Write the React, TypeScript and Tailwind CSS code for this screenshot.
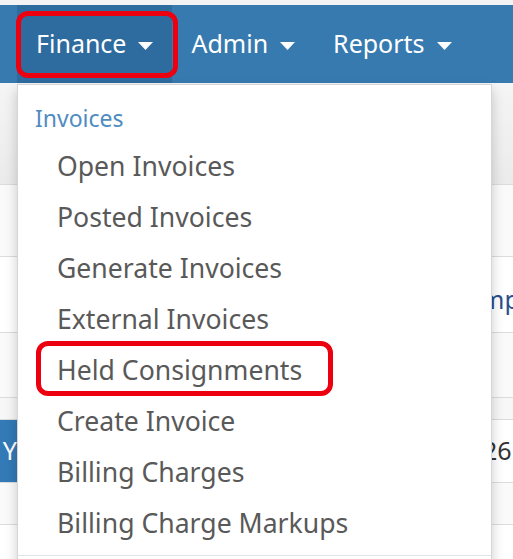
import React from "react";

const ITEMS = [
	"Open Invoices",
	"Posted Invoices",
	"Generate Invoices",
	"External Invoices",
	"Held Consignments",
	"Create Invoice",
	"Billing Charges",
	"Billing Charge Markups",
];

function Caret(): React.ReactElement {
	return (
		<svg width="15" height="8" viewBox="0 0 15 8" className="ml-3 mt-1">
			<path d="M0 0 L15 0 L7.5 8 Z" fill="white" />
		</svg>
	);
}

function NavItem({ label, active }: { label: string; active?: boolean }): React.ReactElement {
	return (
		<div className={`flex items-center h-full px-[19px] ${active ? "bg-[#2e6b9f]" : ""}`}>
			<span>{label}</span>
			<Caret />
		</div>
	);
}

// background table rows peeking out on both sides of the menu
const ROWS = [
	{ h: 102, cls: "bg-gradient-to-b from-[#f5f5f5] to-[#ebebeb]" },
	{ h: 72, cls: "bg-[#fafafa]" },
	{ h: 76, cls: "bg-white" },
	{ h: 65, cls: "bg-[#fafafa]" },
	{ h: 22, cls: "bg-[#f7f7f7]" },
	{ h: 63, cls: "bg-white", blue: true },
	{ h: 42, cls: "bg-[#fafafa]" },
	{ h: 40, cls: "bg-white" },
];

export default function App(): React.ReactElement {
	return (
		<div
			className="relative w-[513px] h-[559px] overflow-hidden bg-white"
			style={{ fontFamily: '"Noto Sans", "Open Sans", sans-serif' }}
		>
			<div className="h-[5px] bg-[#f3f3f3]" />

			{/* Navbar */}
			<nav className="h-[78px] bg-[#377ab0] text-white text-[25px] flex items-stretch pl-[17px]">
				<NavItem label="Finance" active />
				<NavItem label="Admin" />
				<NavItem label="Reports" />
			</nav>

			{/* Table behind the menu */}
			<div className="flex flex-col">
				{ROWS.map((r, i) => (
					<div key={i} className={`flex border-b border-[#dcdcdc] ${r.cls}`} style={{ height: r.h }}>
						<div
							className={`w-[17px] flex items-center justify-end overflow-hidden text-[25px] ${
								r.blue ? "bg-[#337ab7] text-white" : ""
							}`}
						>
							{r.blue && <span>Y</span>}
						</div>
						<div className="flex-1" />
						<div className="w-[22px] flex items-center overflow-hidden text-[25px] whitespace-nowrap">
							{i === 2 && <span className="text-[#2b4f8a] -ml-[10px] mt-[10px]">mp</span>}
							{i === 5 && <span className="text-[#333] -ml-[8px]">26</span>}
						</div>
					</div>
				))}
			</div>

			{/* Dropdown menu */}
			<div className="absolute left-[17px] top-[84px] w-[475px] h-[520px] bg-white border border-[#d6d6d6] shadow-[0_6px_12px_rgba(0,0,0,0.2)]">
				<div className="pl-[17px] pt-[18px] pb-[8px] text-[23px] leading-[30px] text-[#4f8cc1]">Invoices</div>
				<ul className="flex flex-col">
					{ITEMS.map(item => (
						<li
							key={item}
							className="pl-[39px] h-[51px] flex items-center text-[26.6px] text-[#595959] whitespace-nowrap"
						>
							{item}
						</li>
					))}
				</ul>
				<div className="mt-[6px] border-t border-[#e3e3e3]" />
			</div>

			{/* Red highlight boxes */}
			<div className="absolute left-[16px] top-[11px] w-[162px] h-[67px] border-[5px] border-[#ec0010] rounded-[12px]" />
			<div className="absolute left-[36px] top-[341px] w-[297px] h-[55px] border-[5px] border-[#ec0010] rounded-[12px]" />
		</div>
	);
}
